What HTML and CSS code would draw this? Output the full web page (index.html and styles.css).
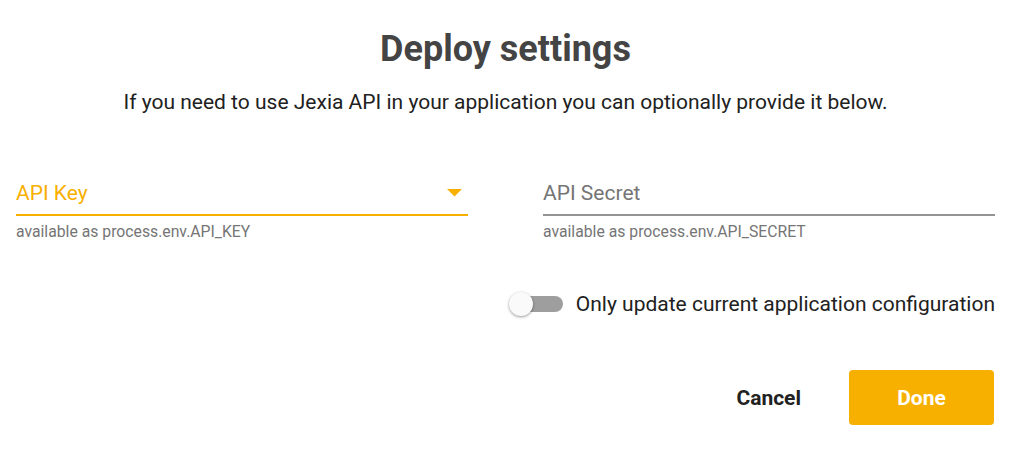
FILE: index.html
```html
<!DOCTYPE html>
<html>
<head>
<meta charset="utf-8">
<link rel="stylesheet" href="styles.css">
</head>
<body>
<div class="dialog">
  <h1 class="title">Deploy settings</h1>
  <p class="subtitle">If you need to use Jexia API in your application you can optionally provide it below.</p>
  <div class="fields">
    <div class="field field-active">
      <div class="control">
        <span class="label">API Key</span>
        <svg class="arrow" width="15" height="8" viewBox="0 0 15 8"><path d="M0 0h15L7.5 7.5z" fill="#f8b000"/></svg>
      </div>
      <div class="hint">available as process.env.API_KEY</div>
    </div>
    <div class="field">
      <div class="control">
        <span class="label">API Secret</span>
      </div>
      <div class="hint">available as process.env.API_SECRET</div>
    </div>
  </div>
  <div class="toggle-row">
    <div class="toggle"><div class="track"></div><div class="thumb"></div></div>
    <span class="toggle-label">Only update current application configuration</span>
  </div>
  <div class="actions">
    <button class="btn btn-cancel">Cancel</button>
    <button class="btn btn-done">Done</button>
  </div>
</div>
</body>
</html>
```
FILE: styles.css
```css
html, body {
  margin: 0;
  padding: 0;
  background: #fff;
  font-family: Roboto, "Liberation Sans", sans-serif;
}
.dialog {
  padding: 27px 26px 0 16px;
  display: flex;
  flex-direction: column;
}
.title {
  margin: 0;
  text-align: center;
  font-size: 36px;
  line-height: 44px;
  font-weight: 700;
  color: #444;
}
.subtitle {
  margin: 17px 0 0;
  text-align: center;
  font-size: 21px;
  line-height: 28px;
  color: #212121;
}
.fields {
  display: flex;
  gap: 75px;
  margin-top: 60px;
}
.field {
  flex: 1;
}
.control {
  height: 40px;
  border-bottom: 2px solid #949494;
  display: flex;
  align-items: center;
  justify-content: space-between;
  box-sizing: border-box;
  padding-bottom: 4px;
}
.field-active .control {
  border-bottom-color: #f8b000;
}
.label {
  font-size: 21px;
  color: #757575;
}
.field-active .label {
  color: #f8b000;
}
.arrow {
  margin-right: 6px;
}
.hint {
  margin-top: 6px;
  font-size: 15.75px;
  color: #757575;
}
.toggle-row {
  display: flex;
  align-items: center;
  justify-content: flex-end;
  margin-top: 50px;
  gap: 13px;
}
.toggle {
  position: relative;
  width: 55px;
  height: 26px;
}
.track {
  position: absolute;
  left: 4px;
  right: 0;
  top: 5px;
  height: 16px;
  border-radius: 8px;
  background: #9e9e9e;
}
.thumb {
  position: absolute;
  left: 1px;
  top: 1px;
  width: 24px;
  height: 24px;
  border-radius: 50%;
  background: #fafafa;
  box-shadow: 0 1px 3px rgba(0,0,0,0.4);
}
.toggle-label {
  font-size: 21px;
  color: #212121;
}
.actions {
  display: flex;
  justify-content: flex-end;
  align-items: center;
  margin-top: 53px;
  gap: 24px;
  padding-right: 1px;
}
.btn {
  font-family: Roboto, "Liberation Sans", sans-serif;
  font-weight: 700;
  font-size: 21px;
  border: none;
  cursor: pointer;
}
.btn-cancel {
  background: none;
  color: #212121;
  padding: 0 24px;
  height: 54px;
}
.btn-done {
  background: #f8b000;
  color: #fff;
  width: 145px;
  height: 55px;
  border-radius: 4px;
}
```
